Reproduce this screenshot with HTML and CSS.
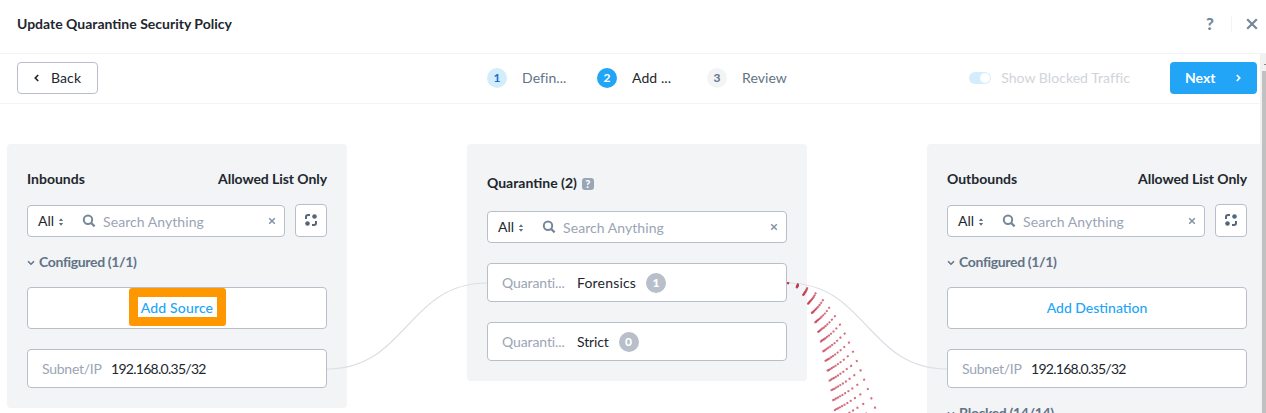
FILE: index.html
```html
<!DOCTYPE html>
<html lang="en">
<head>
<meta charset="utf-8">
<title>Update Quarantine Security Policy</title>
<link rel="stylesheet" href="styles.css">
</head>
<body>
<svg class="defs" width="0" height="0" aria-hidden="true">
  <symbol id="sort" viewBox="0 0 6 8"><path d="M3 0.2 5.2 3H.8zM3 7.8.8 5h4.400z" fill="#627386"/></symbol>
  <symbol id="search" viewBox="0 0 14 14"><circle cx="6" cy="5.700" r="4.200" fill="none" stroke="#76879a" stroke-width="2"/><path d="m9 8.800 3.600 3.600" stroke="#76879a" stroke-width="2.200"/></symbol>
  <symbol id="clear" viewBox="0 0 8 8"><path d="m1.200 1.200 5.600 5.600m0-5.600L1.200 6.800" stroke="#8392a5" stroke-width="1.500"/></symbol>
  <symbol id="group" viewBox="0 0 12 12"><path d="M1 5V3a2 2 0 0 1 2-2h2M11 7v2a2 2 0 0 1-2 2H7" fill="none" stroke="#56677b" stroke-width="2"/><circle cx="9.500" cy="2.500" r="2.300" fill="#56677b"/><circle cx="2.500" cy="9.500" r="2.300" fill="#56677b"/></symbol>
  <symbol id="down" viewBox="0 0 8 6"><path d="m1 1.300 3 3 3-3" fill="none" stroke="#627386" stroke-width="1.500"/></symbol>
</svg>
<header class="titlebar">
  <h1 class="title">Update Quarantine Security Policy</h1>
  <div class="title-actions">
    <span class="help">?</span>
    <span class="divider"></span>
    <svg class="close" width="12" height="12" viewBox="0 0 12 12"><path d="m1.200 1.200 9.600 9.600m0-9.600-9.600 9.600" stroke="#76879a" stroke-width="2.200"/></svg>
  </div>
</header>
<div class="viewport">
  <main class="content">
    <nav class="toolbar">
      <button class="btn back"><svg width="5" height="8" viewBox="0 0 5 8"><path d="M4.200 1 1.300 4l2.900 3" fill="none" stroke="#22272e" stroke-width="1.700"/></svg><span>Back</span></button>
      <ol class="steps">
        <li class="step done"><span class="num">1</span><span class="step-label">Defin...</span></li>
        <li class="step current"><span class="num">2</span><span class="step-label">Add ...</span></li>
        <li class="step"><span class="num">3</span><span class="step-label">Review</span></li>
      </ol>
      <div class="toolbar-end">
        <span class="toggle"><span class="switch"></span><span class="toggle-label">Show Blocked Traffic</span></span>
        <button class="btn next"><span>Next</span><svg width="5" height="8" viewBox="0 0 5 8"><path d="m.8 1 2.900 3L.8 7" fill="none" stroke="#fff" stroke-width="1.700"/></svg></button>
      </div>
    </nav>
    <div class="board">
      <section class="panel inbound">
        <div class="panel-head"><h2 class="heading">Inbounds</h2><span class="heading allowed">Allowed List Only</span></div>
        <div class="filter-row">
          <div class="filter"><span class="scope">All</span><svg class="sort"><use href="#sort"/></svg><svg class="lens"><use href="#search"/></svg><span class="placeholder">Search Anything</span><svg class="clear"><use href="#clear"/></svg></div>
          <button class="group"><svg><use href="#group"/></svg></button>
        </div>
        <h3 class="section"><svg><use href="#down"/></svg><span>Configured (1/1)</span></h3>
        <div class="card add"><span class="link source">Add Source</span><span class="marker"></span></div>
        <div class="card"><span class="kind subnet">Subnet/IP</span><span class="ip">192.168.0.35/32</span></div>
      </section>
      <section class="panel quarantine">
        <div class="panel-head"><h2 class="heading qtitle">Quarantine (2)</h2><span class="hint">?</span></div>
        <div class="filter-row">
          <div class="filter"><span class="scope">All</span><svg class="sort"><use href="#sort"/></svg><svg class="lens"><use href="#search"/></svg><span class="placeholder">Search Anything</span><svg class="clear"><use href="#clear"/></svg></div>
        </div>
        <div class="card"><span class="kind quar">Quaranti...</span><span class="name forensics">Forensics</span><span class="count">1</span></div>
        <div class="card"><span class="kind quar">Quaranti...</span><span class="name strict">Strict</span><span class="count">0</span></div>
      </section>
      <section class="panel outbound">
        <div class="panel-head"><h2 class="heading outb">Outbounds</h2><span class="heading allowed">Allowed List Only</span></div>
        <div class="filter-row">
          <div class="filter"><span class="scope">All</span><svg class="sort"><use href="#sort"/></svg><svg class="lens"><use href="#search"/></svg><span class="placeholder">Search Anything</span><svg class="clear"><use href="#clear"/></svg></div>
          <button class="group"><svg><use href="#group"/></svg></button>
        </div>
        <h3 class="section"><svg><use href="#down"/></svg><span>Configured (1/1)</span></h3>
        <div class="card add"><span class="link dest">Add Destination</span></div>
        <div class="card"><span class="kind subnet">Subnet/IP</span><span class="ip">192.168.0.35/32</span></div>
        <h3 class="section blocked"><svg><use href="#down"/></svg><span>Blocked (14/14)</span></h3>
      </section>
      <svg class="links" width="1260" height="309" viewBox="0 104 1260 309">
        <g class="allowed-links">
          <path d="M327 369C407 369 407 283 487 283"/>
          <path d="M787 283C867 283 867 369 947 369"/>
        </g>
        <g class="blocked-links">
          <path d="M787 283C867 283 867 491 947 491"/>
          <path d="M787 283C867 283 867 550 947 550"/>
          <path d="M787 283C867 283 867 609 947 609"/>
          <path d="M787 283C867 283 867 668 947 668"/>
          <path d="M787 283C867 283 867 727 947 727"/>
          <path d="M787 283C867 283 867 786 947 786"/>
          <path d="M787 283C867 283 867 845 947 845"/>
          <path d="M787 283C867 283 867 904 947 904"/>
          <path d="M787 283C867 283 867 963 947 963"/>
          <path d="M787 283C867 283 867 1022 947 1022"/>
          <path d="M787 283C867 283 867 1081 947 1081"/>
        </g>
      </svg>
    </div>
  </main>
  <div class="scrollbar"><span class="scroll-arrow"></span><span class="thumb"></span></div>
</div>
</body>
</html>
```
FILE: styles.css
```css
* { box-sizing: border-box; }
body { margin: 0; height: 413px; overflow: hidden; background: #fff; color: #22272e; font: 14px/20px Lato, "Open Sans", sans-serif; white-space: nowrap; }
h1, h2, h3, ol { margin: 0; padding: 0; font: inherit; list-style: none; }
button { font: inherit; margin: 0; padding: 0; }
svg { display: block; flex: none; }
.defs { position: absolute; }

.titlebar { height: 54px; padding: 0 8px 6px 17px; display: flex; align-items: center; justify-content: space-between; border-bottom: 1px solid #f2f4f6; }
.title { font-weight: 700; }
.title-actions { display: flex; align-items: center; color: #76879a; }
.help { font-size: 17px; font-weight: 900; }
.divider { width: 1px; height: 16px; margin: 0 14px 0 17px; background: #f2f4f6; }

.viewport { display: flex; height: 359px; overflow: hidden; }
.content { width: 1260px; flex: none; overflow: hidden; }
.toolbar { height: 50px; padding: 0 3px 1px 17px; display: grid; grid-template-columns: 470px 1fr auto; align-items: center; border-bottom: 1px solid #f2f4f6; }
.btn { display: flex; align-items: center; height: 32px; border-radius: 4px; }
.back { width: 81px; padding-left: 16px; gap: 12px; background: #fff; color: #22272e; border: 1px solid #b8bfca; letter-spacing: .1px; }
.next { width: 87px; padding: 0 16px 0 15px; justify-content: space-between; background: #22a5f7; color: #fff; border: 0; font-weight: 700; }
.steps { display: flex; }
.step { width: 110px; display: flex; align-items: center; gap: 15px; color: #627386; }
.step-label { letter-spacing: .08px; }
.num { width: 20px; height: 20px; border-radius: 50%; background: #f2f4f6; text-align: center; font-size: 12px; font-weight: 700; }
.done .num { background: #d3edfd; color: #1b6dc6; }
.current { color: #22272e; }
.current .num { background: #22a5f7; color: #fff; }
.toolbar-end { display: flex; align-items: center; gap: 40px; }
.toggle { display: flex; align-items: center; gap: 10px; color: #d0d4db; }
.toggle-label { letter-spacing: .05px; }
.switch { width: 22px; height: 12px; padding: 1px; border-radius: 6px; background: #d3edfd; display: flex; justify-content: flex-end; }
.switch::after { content: ""; width: 10px; height: 10px; border-radius: 50%; background: #fff; }

.board { position: relative; height: 309px; padding: 40px 0 0 7px; display: flex; align-items: flex-start; gap: 120px; }
.panel { width: 340px; flex: none; padding: 25px 20px 20px; border-radius: 4px; background: #f2f4f6; }
.panel-head { display: flex; align-items: center; justify-content: space-between; height: 20px; }
.heading { font-weight: 700; }
.allowed { letter-spacing: -.07px; }
.filter-row { display: flex; align-items: flex-end; gap: 10px; margin-top: 15px; }
.filter { flex: 1; height: 32px; padding: 0 8px 0 10px; display: flex; align-items: center; background: #fff; border: 1px solid #b8bfca; border-radius: 4px; }
.sort { width: 6px; height: 8px; margin: 1px 18px 0 4px; }
.lens { width: 14px; height: 14px; }
.placeholder { margin: 2px auto 0 7px; color: #9aa5b5; letter-spacing: .06px; }
.clear { width: 8px; height: 8px; }
.group { width: 32px; height: 33px; display: grid; place-items: center; background: #fff; border: 1px solid #b8bfca; border-radius: 4px; }
.group svg { width: 12px; height: 12px; margin-bottom: 1px; }
.section { display: flex; align-items: center; gap: 4px; margin-top: 15px; color: #627386; font-weight: 700; letter-spacing: -.35px; }
.section svg { width: 8px; height: 6px; margin-top: 2px; }
.card { height: 39px; margin-top: 20px; padding: 0 14px; display: flex; align-items: center; background: #fff; border: 1px solid #b8bfca; border-radius: 4px; }
.add { position: relative; height: 42px; margin-top: 15px; justify-content: center; color: #22a5f7; font-weight: 500; }
.source { letter-spacing: .15px; }
.marker { position: absolute; left: 101px; top: 0; width: 97px; height: 38px; border: 9px solid #ff9800; border-radius: 3px; }
.kind { width: 60px; margin-right: 9px; color: #9aa5b5; }
.subnet { letter-spacing: -.25px; }
.ip { letter-spacing: -.72px; }
.quar { width: 75px; margin: 0; letter-spacing: -.1px; }
.forensics { letter-spacing: .18px; }
.strict { letter-spacing: -.15px; }
.count { width: 20px; height: 20px; margin-left: 10px; border-radius: 50%; background: #b8bfca; color: #fff; text-align: center; font-size: 12px; font-weight: 900; }
.quarantine { padding-top: 29px; }
.quarantine .panel-head { justify-content: flex-start; gap: 5px; }
.quarantine .filter-row { margin-top: 18px; }
.hint { width: 12px; height: 12px; margin-top: 1px; border-radius: 3px; background: #9aa5b5; color: #fff; font-size: 11px; line-height: 12px; font-weight: 900; text-align: center; }
.outbound { height: 400px; }
.blocked { margin-top: 15px; }

.links { position: absolute; left: 0; top: 0; overflow: hidden; fill: none; pointer-events: none; }
.allowed-links { stroke: #dcdfe5; stroke-width: 1.200; }
.blocked-links { stroke: #c43b50; stroke-width: 2; stroke-dasharray: 2 8; stroke-opacity: .75; }

.scrollbar { width: 6px; height: 359px; padding-top: 10px; background: #f1f1f1; display: flex; flex-direction: column; }
.scroll-arrow { width: 2px; height: 1px; margin-left: auto; background: #8a8a8a; }
.thumb { flex: 1; margin: 6px 0 0 2px; background: #c1c1c1; }
```
